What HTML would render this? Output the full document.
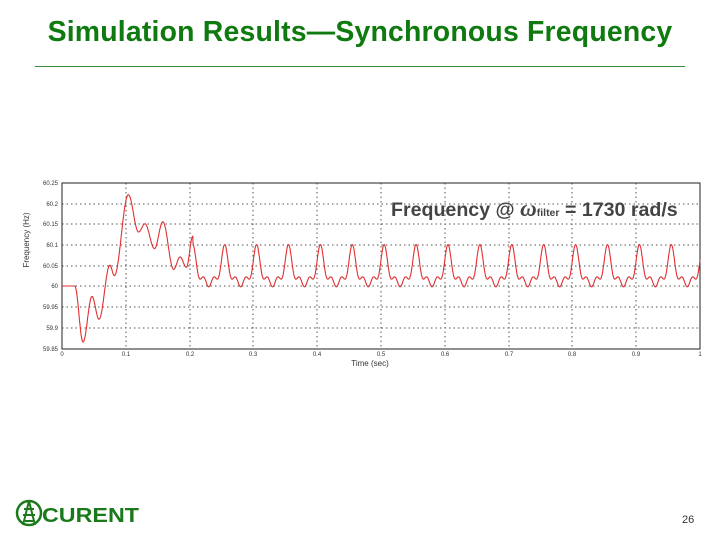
<!DOCTYPE html>
<html><head><style>
body{margin:0;width:720px;height:540px;background:#fff;position:relative;overflow:hidden;font-family:"Liberation Sans",sans-serif}
.t{position:absolute;left:0;width:720px;top:16px;text-align:center;color:#0f7a0f;font-weight:bold;font-size:28.4px;letter-spacing:0.2px}
.hr{position:absolute;left:35px;top:66px;width:650px;height:1px;background:#3a8a3a}
.lab{position:absolute;left:391px;top:196px;font-weight:bold;font-size:19.6px;color:#444;white-space:nowrap}
.pn{position:absolute;left:682px;top:514px;font-size:11px;color:#333}
</style></head><body>
<div class="t">Simulation Results—Synchronous Frequency</div>
<div class="hr"></div>
<svg width="720" height="540" style="position:absolute;left:0;top:0" font-family="Liberation Sans, sans-serif">
<g stroke="#555" stroke-dasharray="1.5,3" stroke-width="1">
<line x1="62" x2="700" y1="204" y2="204"/><line x1="62" x2="700" y1="224" y2="224"/><line x1="62" x2="700" y1="245" y2="245"/><line x1="62" x2="700" y1="266" y2="266"/><line x1="62" x2="700" y1="286" y2="286"/><line x1="62" x2="700" y1="307" y2="307"/><line x1="62" x2="700" y1="328" y2="328"/>
<line y1="183" y2="349" x1="126" x2="126"/><line y1="183" y2="349" x1="190" x2="190"/><line y1="183" y2="349" x1="253" x2="253"/><line y1="183" y2="349" x1="317" x2="317"/><line y1="183" y2="349" x1="381" x2="381"/><line y1="183" y2="349" x1="445" x2="445"/><line y1="183" y2="349" x1="509" x2="509"/><line y1="183" y2="349" x1="572" x2="572"/><line y1="183" y2="349" x1="636" x2="636"/>
</g>
<rect x="62" y="183" width="638" height="166" fill="none" stroke="#222" stroke-width="1"/>
<g font-size="6" fill="#333" text-anchor="end">
<text x="58" y="185">60.25</text><text x="58" y="206">60.2</text><text x="58" y="226">60.15</text><text x="58" y="247">60.1</text><text x="58" y="268">60.05</text><text x="58" y="288">60</text><text x="58" y="309">59.95</text><text x="58" y="330">59.9</text><text x="58" y="351">59.85</text>
</g>
<g font-size="6" fill="#333" text-anchor="middle">
<text x="62" y="356">0</text><text x="126" y="356">0.1</text><text x="190" y="356">0.2</text><text x="253" y="356">0.3</text><text x="317" y="356">0.4</text><text x="381" y="356">0.5</text><text x="445" y="356">0.6</text><text x="509" y="356">0.7</text><text x="572" y="356">0.8</text><text x="636" y="356">0.9</text><text x="700" y="356">1</text>
</g>
<text x="370" y="366" font-size="8" fill="#333" text-anchor="middle">Time (sec)</text>
<text transform="translate(29,240) rotate(-90)" font-size="8" fill="#333" text-anchor="middle">Frequency (Hz)</text>
<path id="c" fill="none" stroke="#e03030" stroke-width="1.1"/>
<g transform="translate(16,498)">
<circle cx="13" cy="15" r="12" fill="none" stroke="#1a7a1a" stroke-width="2.5"/>
<path d="M13 3 L7 27 M13 3 L19 27 M8 11 H18 M7 17 H19 M9 23 H17" stroke="#1a7a1a" stroke-width="2" fill="none"/>
</g>
<text x="42" y="522" font-size="20" font-weight="bold" fill="#1a7a1a" textLength="97" lengthAdjust="spacingAndGlyphs">CURENT</text>
</svg>
<div class="lab">Frequency @ <i style="font-family:'Liberation Serif',serif;font-size:23px">ω</i><span style="font-size:10.5px">filter</span> = 1730 rad/s</div>
<div class="pn">26</div>
<script>
var k=[[0,60],[0.02,60],[0.033,59.865],[0.047,59.975],[0.058,59.92],[0.075,60.05],[0.082,60.025],[0.104,60.22],[0.12,60.13],[0.13,60.15],[0.145,60.09],[0.158,60.155],[0.175,60.04],[0.185,60.07],[0.195,60.045],[0.205,60.12]];
function f(t){if(t<=0.205){for(var i=0;i<k.length-1;i++){if(t<=k[i+1][0]){var a=k[i],b=k[i+1],u=(t-a[0])/(b[0]-a[0]);u=(1-Math.cos(Math.PI*u))/2;return a[1]+(b[1]-a[1])*u;}}}
var p=((t-0.205)/0.05)*2*Math.PI;return 60.033+0.036*Math.cos(p)+0.016*Math.cos(2*p)+0.015*Math.cos(3*p);}
var d="";for(var i=0;i<=2000;i++){var t=i/2000;var x=62+t*638,y=286-(f(t)-60)*415;d+=(i?"L":"M")+x.toFixed(1)+" "+y.toFixed(1);}
document.getElementById("c").setAttribute("d",d);
</script>
</body></html>
